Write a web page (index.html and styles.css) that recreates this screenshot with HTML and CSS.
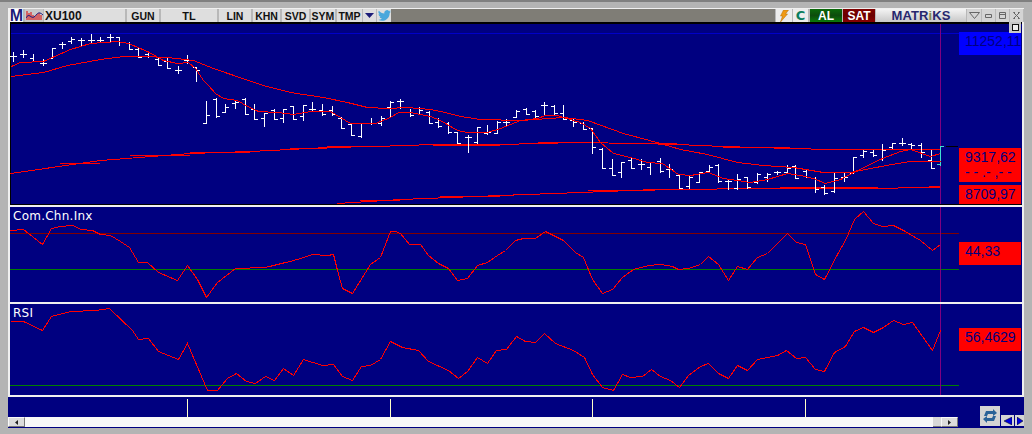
FILE: index.html
```html
<!DOCTYPE html>
<html lang="tr">
<head>
    <meta charset="UTF-8">
    <title>XU100 Grafik</title>
    <link rel="stylesheet" href="styles.css">
</head>
<body>
    <div class="window">
        <div class="toolbar">
            <div class="btn btn-logo">M</div>
            <div class="btn btn-icon">
                <svg width="17" height="11" viewBox="0 0 17 11">
                    <path class="ico-bars" d="M1 1V10M3 3V10M5 2V10M7 5V10M9 6V10M11 4V10M13 3V10M15 5V10"/>
                    <path class="ico-wave" d="M0 8C3 2 5 9 8 7S12 0 17 5"/>
                </svg>
            </div>
            <div class="btn btn-symbol">XU100</div>
            <div class="btn btn-gun">GUN</div>
            <div class="btn btn-tl">TL</div>
            <div class="btn btn-lin">LIN</div>
            <div class="btn btn-khn">KHN</div>
            <div class="btn btn-svd">SVD</div>
            <div class="btn btn-sym">SYM</div>
            <div class="btn btn-tmp">TMP</div>
            <div class="btn btn-drop">
                <svg width="9" height="5" viewBox="0 0 9 5"><path class="ico-navy" d="M0 0H9L4.5 5Z"/></svg>
            </div>
            <div class="btn btn-twitter">
                <svg width="13" height="11" viewBox="0 0 24 20"><path class="ico-twitter" d="M24 2.4a10 10 0 0 1-2.8.8 5 5 0 0 0 2.1-2.7c-.9.6-2 1-3.1 1.2a4.9 4.9 0 0 0-8.4 4.5C7.7 6 4.1 4.1 1.6 1.1a4.8 4.8 0 0 0 1.5 6.6 4.9 4.9 0 0 1-2.2-.6v.1a4.9 4.9 0 0 0 3.9 4.8 5 5 0 0 1-2.2.1 4.9 4.9 0 0 0 4.6 3.4A9.9 9.9 0 0 1 0 17.6 14 14 0 0 0 7.5 19.8c9.1 0 14-7.5 14-14v-.6A10 10 0 0 0 24 2.4z"/></svg>
            </div>
            <div class="toolbar-fill"></div>
            <div class="btn btn-flash">
                <svg width="10" height="12" viewBox="0 0 9 12"><path class="ico-flash" d="M4 0H9L6 4H8L1 12L3 6H1Z"/></svg>
            </div>
            <div class="btn btn-c">C</div>
            <div class="btn-trade btn-al">AL</div>
            <div class="btn-trade btn-sat">SAT</div>
            <div class="btn-brand">MATR<span class="brand-dot">i</span>KS</div>
            <div class="btn btn-win">
                <svg width="11" height="7" viewBox="0 0 11 7"><path class="ico-line" d="M.5 .5H10.500L5.500 6.500Z"/></svg>
            </div>
            <div class="btn btn-win">
                <svg width="7" height="5" viewBox="0 0 7 5"><path class="ico-line" d="M.5 1.500H6.500V4.500H.5Z"/></svg>
            </div>
            <div class="btn btn-win">
                <svg width="7" height="7" viewBox="0 0 7 7"><path class="ico-line" d="M.5 .5H6.500V6.500H.5ZM.5 2.500H6.500"/></svg>
            </div>
            <div class="btn btn-win">
                <svg width="7" height="7" viewBox="0 0 7 7"><path class="ico-line" d="M.5 .5L6.500 6.500M6.500 .5L.5 6.500M.5 .5H2M5 .5H6.500M.5 6.500H2M5 6.500H6.500"/></svg>
            </div>
        </div>

        <div class="panel panel-main">
            <svg class="plot" id="plotMain" width="949" height="183" viewBox="10 22 949 183"></svg>
            <div class="axis">
                <div class="val val-blue val-top">11252,11</div>
                <div class="val val-red val-close">
                    <span>9317,62</span>
                    <span class="val-dash">- - .- ,- -</span>
                </div>
                <div class="val val-red val-low">8709,97</div>
            </div>
            <div class="panel-toggle"><span></span></div>
        </div>

        <div class="panel panel-cci">
            <span class="panel-title">Com.Chn.Inx</span>
            <svg class="plot" id="plotCci" width="949" height="95" viewBox="10 207 949 95"></svg>
            <div class="axis">
                <div class="val val-red val-cci">44,33</div>
            </div>
        </div>

        <div class="panel panel-rsi">
            <span class="panel-title">RSI</span>
            <svg class="plot" id="plotRsi" width="949" height="91" viewBox="10 304 949 91"></svg>
            <div class="axis">
                <div class="val val-red val-rsi">56,4629</div>
            </div>
        </div>

        <div class="footer">
            <div class="footer-left">
                <svg class="timeline" id="timeline" width="950" height="20" viewBox="8 397 950 20"></svg>
                <div class="scrollbar">
                    <div class="scroll-btn"><svg width="3" height="5" viewBox="0 0 3 5"><path class="ico-dark" d="M3 0V5L0 2.500Z"/></svg></div>
                    <div class="scroll-track"></div>
                    <div class="scroll-thumb"></div>
                    <div class="scroll-btn"><svg width="3" height="5" viewBox="0 0 3 5"><path class="ico-dark" d="M0 0V5L3 2.500Z"/></svg></div>
                </div>
            </div>
            <div class="footer-tools">
                <div class="tool-refresh">
                    <svg width="14" height="14" viewBox="0 0 14 14"><path class="ico-refresh" d="M1 7L3 2H10V0L14 4L10 7V5H5L4 7ZM13 7L11 12H4V14L0 10L4 7V9H9L10 7Z"/></svg>
                </div>
                <div class="tool-arrow"><svg width="8" height="8" viewBox="0 0 8 8"><path class="ico-arrow" d="M8 0V8L0 4Z"/></svg></div>
                <div class="tool-arrow tool-arrow-right"><svg width="6" height="8" viewBox="0 0 6 8"><path class="ico-arrow" d="M0 0V8L6 4Z"/></svg></div>
            </div>
        </div>
    </div>
    <script src="script.js"></script>
</body>
</html>
```

FILE: styles.css
```css
* { box-sizing: border-box; }
body { margin: 0; width: 1032px; height: 434px; overflow: hidden; background: #b4b4b4; border-top: 2px solid #808080; font-family: 'Liberation Sans', sans-serif; }

.window { margin: 6px 0 0 8px; width: 1016px; height: 420px; background: #f0f0f0; padding-top: 1px; }

.toolbar { display: flex; height: 13px; background: #b8b8b8; box-shadow: inset 2px 0 0 #f0f0f0; padding-left: 2px; }
.btn { display: flex; align-items: center; justify-content: center; height: 13px; margin-right: 2px; background: #dedede; color: #111; font-size: 10.5px; font-weight: bold; flex: none; }
.btn-logo { width: 13px; margin-right: 2px; background: #fff; color: #1c1c78; font-size: 16px; }
.btn-icon { width: 18px; margin-right: 1px; background: #c8c8c8; }
.btn-symbol { width: 81px; justify-content: flex-start; padding-left: 1px; font-size: 12px; }
.btn-gun { width: 32px; }
.btn-tl { width: 56px; font-size: 11px; }
.btn-lin { width: 32px; }
.btn-khn { width: 27px; }
.btn-svd { width: 27px; }
.btn-sym { width: 24px; }
.btn-tmp { width: 25px; margin-right: 1px; }
.btn-drop { width: 13px; margin-right: 1px; }
.btn-twitter { width: 14px; margin-right: 0; }
.toolbar-fill { flex: 1; background: #7f7d76; margin-right: 1px; }
.btn-flash { width: 16px; margin-right: 1px; background: #ececec; }
.btn-c { width: 15px; margin-right: 2px; background: #ececec; color: #0a7d5e; font-family: 'DejaVu Sans', sans-serif; font-size: 13px; }
.btn-trade { display: flex; align-items: center; justify-content: center; width: 32px; height: 13px; color: #fff; font-size: 12px; font-weight: bold; flex: none; }
.btn-al { background: linear-gradient(#0a6a0a, #0c4c0c 50%, #0a7a0a); }
.btn-sat { margin-left: 1px; margin-right: 1px; background: linear-gradient(#800000, #6a0000 50%, #8a0000); }
.btn-brand { display: flex; align-items: center; justify-content: center; width: 90px; height: 13px; margin-right: 1px; background: linear-gradient(#f4f4f4, #c8c8c8); color: #27276e; font-size: 13px; font-weight: bold; letter-spacing: 0.1px; flex: none; }
.brand-dot { color: #8a8a50; }
.btn-win { width: 13px; margin-right: 1px; background: #d4d4d4; }
.btn-win:nth-last-child(4) { width: 14px; }

.ico-bars { stroke: #e00000; fill: none; }
.ico-wave { stroke: #1a1a80; fill: none; }
.ico-navy { fill: #1c1c78; }
.ico-twitter { fill: #4aa8dc; }
.ico-flash { fill: #f09a14; stroke: #b06a00; stroke-width: 0.5; }
.ico-line { fill: none; stroke: #666; }
.ico-dark { fill: #222; }
.ico-refresh { fill: #2a6298; }
.ico-arrow { fill: #0000e0; stroke: #000; stroke-width: 0.5; }

.panel { position: relative; display: flex; margin: 0 2px; background: #000080; }
.panel-main { height: 183px; margin-bottom: 2px; box-shadow: inset 1px 0 0 #000, inset 0 2px 0 #000, inset 0 -1px 0 #000; }
.panel-cci { height: 95px; margin-bottom: 2px; }
.panel-rsi { height: 91px; margin-bottom: 2px; }
.panel-title { position: absolute; left: 3px; top: 2px; color: #fff; font-family: 'DejaVu Sans', sans-serif; font-size: 12px; line-height: 14px; letter-spacing: 0.25px; }
.plot { display: block; flex: none; shape-rendering: crispEdges; }

.axis { width: 63px; display: flex; flex-direction: column; }
.val { width: 62px; color: #000080; font-size: 14px; line-height: 16px; padding-left: 6px; white-space: nowrap; overflow: hidden; }
.val-blue { background: #0000ff; }
.val-red { background: #ff0000; }
.val-top { height: 23px; margin-top: 10px; padding-top: 1px; }
.val-close { display: flex; flex-direction: column; height: 34px; margin-top: 93px; padding-top: 1px; }
.val-dash { line-height: 14px; }
.val-low { height: 19px; margin-top: 3px; padding-top: 1px; }
.val-cci { height: 23px; margin-top: 35px; padding-top: 1px; }
.val-rsi { height: 23px; margin-top: 24px; padding-top: 1px; }

.panel-toggle { position: absolute; right: 1px; top: 0; width: 12px; height: 11px; background: #c8c8c8; display: flex; align-items: center; justify-content: center; }
.panel-toggle span { width: 7px; height: 7px; border: 1px solid #111; background: #eee; }

.line-ma { fill: none; stroke: #ff0000; stroke-width: 1; }
.line-long { fill: none; stroke: #ff0000; stroke-width: 1; }
.line-thick { stroke: #ff0000; }
.line-ind { fill: none; stroke: #ff0000; stroke-width: 1; }
.bars { fill: none; stroke: #ffffff; stroke-width: 1; }
.bars-last { fill: none; stroke: #40e0d0; stroke-width: 1; }
.grid-blue { stroke: #0000c8; }
.grid-red { stroke: #800000; }
.grid-green { stroke: #008000; }
.grid-black { stroke: #000; }
.cross { stroke: #800080; }
.tick { stroke: #ffffc8; }

.footer { display: flex; height: 31px; background: #000080; }
.footer-left { width: 950px; display: flex; flex-direction: column; }
.timeline { display: block; shape-rendering: crispEdges; }
.scrollbar { display: flex; height: 10px; background: #f4f4f4; }
.scroll-btn { display: flex; align-items: center; justify-content: center; width: 17px; height: 10px; background: #dcdcdc; border: 1px solid #f8f8f8; border-right-color: #777; border-bottom-color: #777; flex: none; }
.scroll-track { flex: 1; background: #f8f8f8; }
.scroll-thumb { width: 8px; background: #d8d8d8; border-bottom: 1px solid #777; }
.footer-tools { flex: 1; display: flex; align-items: flex-end; padding: 0 0 2px 22px; }
.tool-refresh { display: flex; align-items: center; justify-content: center; width: 20px; height: 20px; margin-right: 1px; background: #d4d4d4; }
.tool-arrow { display: flex; align-items: center; justify-content: center; width: 13px; height: 11px; background: #d4d4d4; margin-right: 1px; }
.tool-arrow-right { width: 9px; margin-right: 0; }
```

FILE: script.js
```javascript
// x, high, low, left tick (open), right tick (close)
var bars = [
    [13,52,61,56,56],[23,50,57,54,54],[33,54,61,58,61],[43,59,65,63,63],[52,48,58,58,48],
    [62,42,48,44,44],[71,37,43,41,39],[81,38,45,40,40],[91,34,42,40,40],[100,37,42,40,40],
    [110,34,42,37,37],[119,37,45,37,42],[129,42,49,43,49],[138,48,57,49,57],[148,51,57,54,56],
    [158,57,65,59,65],[167,58,68,61,68],[178,66,73,70,70],[187,55,63,60,60],[196,67,81,67,70],
    [206,101,123,123,115],[216,98,117,99,116],[225,104,112,112,107],[235,100,108,103,102],[245,98,114,99,114],
    [254,104,119,109,119],[264,113,126,118,113],[274,109,119,110,119],[283,109,122,118,109],[293,106,119,106,119],
    [303,105,120,116,105],[312,102,110,109,109],[322,104,115,110,114],[332,106,115,110,114],[341,117,128,118,128],
    [351,124,135,124,135],[361,123,137,136,123],[371,118,124,123,123],[381,116,125,123,118],[390,101,117,107,102],
    [400,99,108,101,101],[410,109,116,112,115],[419,107,113,108,110],[429,111,123,112,123],[438,118,127,122,126],
    [448,122,133,123,132],[457,132,143,132,143],[468,135,152,137,137],[477,127,143,142,127],[487,125,134,133,132],
    [497,121,133,133,122],[506,119,125,122,122],[516,110,117,117,111],[526,108,114,109,114],[535,110,117,111,116],
    [544,102,115,105,105],[554,105,114,106,113],[563,105,119,113,119],[573,118,126,120,122],[583,122,129,123,129],
    [592,128,153,128,147],[602,148,168,149,168],[612,159,175,168,175],[621,162,177,172,162],[631,158,168,160,168],
    [641,159,169,164,164],[650,162,174,167,162],[660,158,172,161,171],[669,164,177,169,169],[679,175,188,175,188],
    [689,176,188,186,177],[699,172,182,182,172],[709,165,172,171,167],[718,164,182,165,181],[728,180,189,181,181],
    [737,174,189,188,179],[747,177,188,177,187],[757,173,183,182,174],[767,173,181,177,174],[777,171,174,172,172],
    [787,165,173,172,168],[795,165,178,166,178],[806,170,177,171,177],[815,177,192,178,189],[824,185,194,187,193],
    [834,173,192,191,178],[844,173,181,177,177],[853,157,173,173,157],[863,150,157,155,151],[873,150,156,152,155],
    [882,144,160,159,150],[892,143,148,147,143],[902,138,145,143,143],[911,143,149,144,145],[921,143,157,145,152],
    [931,150,168,160,168]
];
var lastBar = [940,146,165,164,146];

var ma1 = [[11,66],[20,62],[43,61],[70,49],[90,43],[117,41],[128,43],[147,51],[163,60],[177,63],[188,62],[195,68],[203,80],
    [208,85],[215,93],[223,98],[237,100],[247,106],[258,111],[277,112],[293,114],[310,111],[330,111],[340,117],[350,123],
    [375,123],[390,117],[398,112],[410,112],[430,116],[440,120],[457,130],[467,132],[487,132],[500,128],[520,120],[537,118],
    [545,115],[557,115],[563,117],[580,122],[590,128],[600,142],[613,153],[630,157],[647,162],[662,163],[678,174],[690,175],
    [708,172],[723,178],[737,180],[750,182],[767,179],[787,173],[800,175],[813,178],[825,183],[840,179],[853,172],[882,158],
    [900,151],[910,149],[930,156],[940,153]];
var ma2 = [[11,76],[43,72],[67,65],[100,59],[123,56],[143,56],[167,57],[193,60],[213,68],[245,79],[263,85],[290,92],[323,97],
    [347,102],[367,107],[387,108],[407,107],[430,109],[445,112],[460,116],[480,119],[520,120],[563,117],[587,120],[623,133],
    [660,143],[680,149],[707,154],[737,162],[763,165],[793,167],[823,172],[850,172],[870,168],[897,163],[910,161],[940,161]];
var ma3 = [[10,173],[100,160],[190,153],[250,151],[290,149],[327,147],[375,146],[433,144],[500,144],[538,143],[578,142],[637,143],
    [677,144],[723,146],[790,148],[830,149],[940,149]];
var ma4 = [[337,203],[400,199],[500,195],[580,192],[655,189],[780,188],[878,188],[917,187],[940,186]];

// runs where the slow averages sit two pixels thick: x1, x2, y
var thickRuns = [[60,100,163],[130,190,155],[190,250,152],[290,327,148],[327,375,146],[433,500,145],[538,600,142],[637,677,143],[723,790,147],
    [360,400,200],[440,500,196],[588,655,190],[780,878,187],[917,940,187]];

var cci = [[10,230],[23,229],[42,244],[51,228],[60,226],[72,225],[81,229],[92,230],[100,234],[110,235],[120,241],[129,247],[138,262],
    [147,262],[158,272],[177,280],[187,265],[197,279],[206,297],[217,282],[235,268],[265,267],[285,262],[290,261],[303,257],[312,254],
    [327,255],[333,254],[337,270],[342,288],[352,293],[370,264],[380,257],[390,231],[395,231],[400,233],[409,244],[420,244],[428,255],
    [438,263],[448,268],[457,280],[467,278],[477,265],[487,262],[497,255],[505,250],[515,240],[523,238],[535,238],[545,231],[563,240],
    [575,252],[583,257],[592,279],[602,293],[612,289],[622,277],[633,269],[648,265],[660,264],[672,266],[678,269],[688,268],[700,264],
    [708,256],[718,264],[728,280],[737,266],[747,269],[757,257],[767,253],[787,233],[796,242],[805,244],[815,274],[824,279],[837,254],
    [845,240],[854,219],[863,211],[873,223],[882,226],[893,225],[903,230],[920,240],[932,250],[940,244]];

var rsi = [[10,321],[23,321],[42,330],[51,316],[70,311],[95,310],[109,308],[132,330],[138,339],[148,338],[158,351],[178,359],[187,343],
    [207,390],[217,390],[227,378],[236,373],[246,381],[255,383],[265,376],[274,380],[283,368],[293,375],[303,359],[322,365],[333,364],
    [342,376],[352,380],[361,366],[370,365],[380,359],[390,341],[402,347],[418,350],[428,361],[448,370],[458,378],[467,371],[477,357],
    [487,363],[496,350],[506,349],[516,336],[525,341],[535,342],[544,333],[555,343],[573,350],[584,357],[592,374],[602,387],[613,390],
    [622,374],[630,377],[642,376],[651,369],[660,376],[670,380],[679,387],[688,375],[700,366],[708,363],[718,373],[728,378],[737,365],
    [747,370],[757,359],[777,355],[786,350],[796,358],[805,357],[815,369],[824,371],[834,352],[845,346],[854,331],[863,327],[873,332],
    [883,327],[893,320],[903,324],[912,322],[932,350],[940,330]];

function hline(y, x1, x2, cls) {
    return '<line class="' + cls + '" x1="' + x1 + '" x2="' + x2 + '" y1="' + (y + 0.5) + '" y2="' + (y + 0.5) + '"/>';
}

function vline(x, y1, y2, cls) {
    return '<line class="' + cls + '" x1="' + (x + 0.5) + '" x2="' + (x + 0.5) + '" y1="' + y1 + '" y2="' + y2 + '"/>';
}

function poly(points, cls) {
    var s = points.map(function (p) { return (p[0] + 0.5) + ',' + (p[1] + 0.5); }).join(' ');
    return '<polyline class="' + cls + '" points="' + s + '"/>';
}

function barPath(b) {
    var x = b[0] + 0.5;
    return 'M' + x + ' ' + b[1] + 'V' + (b[2] + 1) +
        'M' + (x - 3.5) + ' ' + (b[3] + 0.5) + 'H' + x +
        'M' + x + ' ' + (b[4] + 0.5) + 'H' + (x + 3.5);
}

document.getElementById('plotMain').innerHTML =
    hline(33, 11, 959, 'grid-blue') +
    vline(940, 24, 204, 'cross') +
    hline(146, 946, 958, 'grid-black') +
    poly(ma3, 'line-long') + poly(ma4, 'line-long') +
    thickRuns.map(function (r) { return hline(r[2], r[0], r[1], 'line-thick'); }).join('') +
    '<path class="bars" d="' + bars.map(barPath).join('') + '"/>' +
    '<path class="bars-last" d="' + barPath(lastBar) + '"/>' +
    poly(ma2, 'line-ma') + poly(ma1, 'line-ma');

document.getElementById('plotCci').innerHTML =
    hline(233, 10, 959, 'grid-red') +
    hline(269, 10, 959, 'grid-green') +
    vline(940, 207, 302, 'cross') +
    poly(cci, 'line-ind');

document.getElementById('plotRsi').innerHTML =
    hline(385, 10, 959, 'grid-green') +
    vline(940, 304, 395, 'cross') +
    poly(rsi, 'line-ind');

document.getElementById('timeline').innerHTML =
    [187, 390, 592, 805].map(function (x) { return vline(x, 399, 417, 'tick'); }).join('');
```
